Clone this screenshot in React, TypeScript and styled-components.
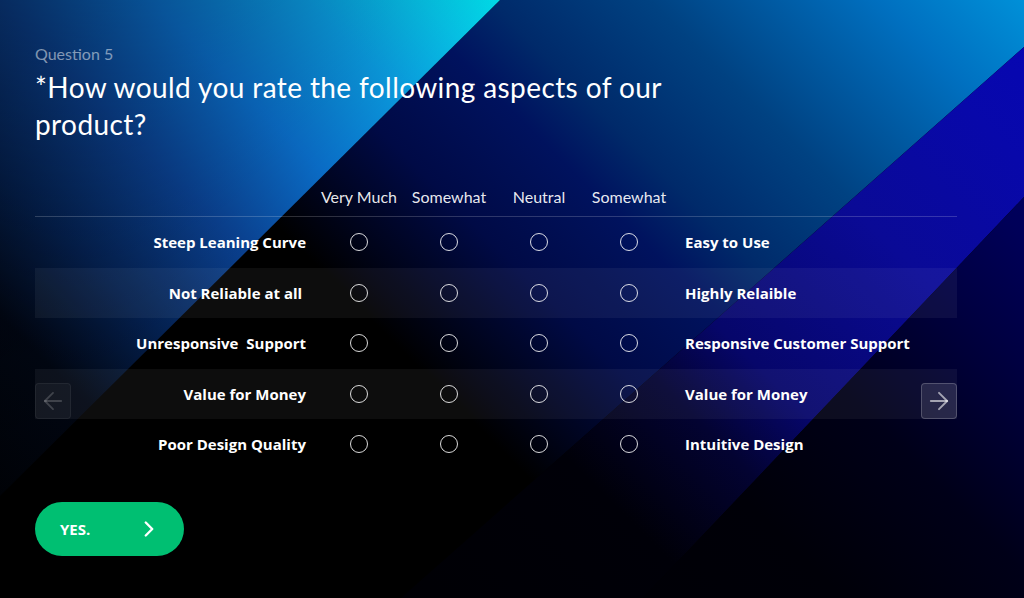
import React from "react";
import styled, { createGlobalStyle } from "styled-components";
import { ArrowLeft, ArrowRight, ChevronRight } from "lucide-react";

const GlobalStyle = createGlobalStyle`
  html, body { margin: 0; padding: 0; background: #000; }
  body {
    font-family: Lato, "Open Sans", "Liberation Sans", sans-serif;
    color: #fff;
    -webkit-font-smoothing: antialiased;
  }
  * { box-sizing: border-box; }
`;

const boldFont = `"Open Sans", Lato, "Liberation Sans", sans-serif`;

const Page = styled.div`
  position: relative;
  min-height: 100vh;
  width: 100%;
  overflow: hidden;
  background: #000;
`;

const Backdrop = styled.svg`
  position: absolute;
  inset: 0;
  width: 100%;
  height: 100%;
  display: block;
  z-index: 0;
`;

const Content = styled.main`
  position: relative;
  z-index: 1;
  padding: 44px 35px 0 35px;
  display: flex;
  flex-direction: column;
  align-items: flex-start;
`;

const QuestionLabel = styled.div`
  font-size: 16px;
  line-height: 20px;
  color: rgba(255, 255, 255, 0.5);
`;

const Title = styled.h1`
  margin: 5px 0 0;
  max-width: 670px;
  font-size: 28px;
  line-height: 37px;
  font-weight: 400;
  letter-spacing: 0.4px;
  color: #fff;
`;

const Table = styled.div`
  position: relative;
  width: 922px;
  margin-top: 35px;
  display: flex;
  flex-direction: column;
`;

const Grid = styled.div`
  display: grid;
  grid-template-columns: 279px repeat(4, 90px) 1fr;
  align-items: center;
`;

const HeaderRow = styled(Grid)`
  height: 39px;
  border-bottom: 1px solid rgba(255, 255, 255, 0.18);
`;

const HeaderCell = styled.div`
  font-size: 16px;
  line-height: 20px;
  text-align: center;
  white-space: nowrap;
  color: rgba(255, 255, 255, 0.92);
`;

const Row = styled(Grid)<{ $striped: boolean }>`
  height: 50.5px;
  background: ${(p) => (p.$striped ? "rgba(255, 255, 255, 0.05)" : "transparent")};
`;

const Label = styled.div<{ $side: "left" | "right" }>`
  font-family: ${boldFont};
  font-size: 15px;
  font-weight: 700;
  line-height: 20px;
  white-space: pre;
  text-align: ${(p) => (p.$side === "left" ? "right" : "left")};
  padding: ${(p) => (p.$side === "left" ? "0 8px 0 0" : "0 0 0 11px")};
  color: #fff;
`;

const Radio = styled.span`
  justify-self: center;
  width: 18px;
  height: 18px;
  border-radius: 50%;
  border: 1.5px solid rgba(255, 255, 255, 0.85);
  cursor: pointer;
`;

const NavButton = styled.button<{ $dir: "prev" | "next" }>`
  position: absolute;
  top: 205px;
  ${(p) => (p.$dir === "prev" ? "left: 0;" : "right: 0;")}
  width: 36px;
  height: 36px;
  padding: 0;
  display: flex;
  align-items: center;
  justify-content: center;
  border-radius: 4px;
  cursor: pointer;
  background: ${(p) =>
    p.$dir === "prev" ? "rgba(255, 255, 255, 0.035)" : "rgba(255, 255, 255, 0.11)"};
  border: 1px solid
    ${(p) => (p.$dir === "prev" ? "rgba(255, 255, 255, 0.06)" : "rgba(255, 255, 255, 0.2)")};
  color: ${(p) => (p.$dir === "prev" ? "rgba(255, 255, 255, 0.18)" : "rgba(255, 255, 255, 0.58)")};
`;

const YesButton = styled.button`
  margin-top: 32px;
  width: 149px;
  height: 54px;
  padding: 0 22px 0 25px;
  display: flex;
  align-items: center;
  justify-content: space-between;
  border: none;
  border-radius: 27px;
  background: #00bf72;
  color: #fff;
  font-family: ${boldFont};
  font-size: 15px;
  font-weight: 700;
  cursor: pointer;
`;

const columns = ["Very Much", "Somewhat", "Neutral", "Somewhat"];

const rows: [string, string][] = [
  ["Steep Leaning Curve", "Easy to Use"],
  ["Not Reliable at all ", "Highly Relaible"],
  ["Unresponsive  Support", "Responsive Customer Support"],
  ["Value for Money", "Value for Money"],
  ["Poor Design Quality", "Intuitive Design"],
];

const Q = { x1: 106.5, y1: 704.5, x2: 917.5, y2: -106.5 };
const P = { x1: 106.5, y1: -106.5, x2: 917.5, y2: 704.5 };

function Background() {
  return (
    <Backdrop viewBox="0 0 1024 598" preserveAspectRatio="none" aria-hidden="true">
      <defs>
        <linearGradient id="bandA" gradientUnits="userSpaceOnUse" {...Q}>
          <stop offset="0" stopColor="#000000" />
          <stop offset="0.174" stopColor="#010612" />
          <stop offset="0.262" stopColor="#04204f" />
          <stop offset="0.366" stopColor="#0a408f" />
          <stop offset="0.462" stopColor="#0a6cc6" />
          <stop offset="0.558" stopColor="#0a98dc" />
          <stop offset="0.628" stopColor="#06c0e4" />
          <stop offset="0.68" stopColor="#00dce6" />
        </linearGradient>
        <linearGradient id="shadeA" gradientUnits="userSpaceOnUse" {...P}>
          <stop offset="0" stopColor="#000" stopOpacity="0.35" />
          <stop offset="0.31" stopColor="#000" stopOpacity="0" />
        </linearGradient>
        <linearGradient id="bandB" gradientUnits="userSpaceOnUse" {...Q}>
          <stop offset="0" stopColor="#000000" />
          <stop offset="0.4" stopColor="#000000" />
          <stop offset="0.523" stopColor="#000a46" />
          <stop offset="0.616" stopColor="#00125e" />
          <stop offset="0.671" stopColor="#002a6a" />
          <stop offset="0.77" stopColor="#004282" />
          <stop offset="0.911" stopColor="#0070c0" />
          <stop offset="1" stopColor="#0090d8" />
        </linearGradient>
        <linearGradient id="bandC" gradientUnits="userSpaceOnUse" {...Q}>
          <stop offset="0" stopColor="#000000" />
          <stop offset="0.436" stopColor="#000008" />
          <stop offset="0.54" stopColor="#030332" />
          <stop offset="0.61" stopColor="#06066a" />
          <stop offset="0.767" stopColor="#0a0a96" />
          <stop offset="0.898" stopColor="#0808aa" />
          <stop offset="1" stopColor="#0606b4" />
        </linearGradient>
        <linearGradient id="bandD" gradientUnits="userSpaceOnUse" {...Q}>
          <stop offset="0" stopColor="#000000" />
          <stop offset="0.52" stopColor="#000008" />
          <stop offset="0.647" stopColor="#000018" />
          <stop offset="0.77" stopColor="#000040" />
          <stop offset="0.854" stopColor="#000058" />
          <stop offset="1" stopColor="#00006c" />
        </linearGradient>
      </defs>
      <rect x="0" y="0" width="1024" height="598" fill="#000" />
      <polygon points="500,0 1024,0 1024,47 401,598 -103,598 0,496" fill="url(#bandB)" />
      <polygon points="1024,47 1024,197 643,598 401,598" fill="url(#bandC)" />
      <polygon points="1024,197 1024,598 643,598" fill="url(#bandD)" />
      <polygon points="0,0 500,0 0,496" fill="url(#bandA)" />
      <polygon points="0,0 500,0 0,496" fill="url(#shadeA)" />
    </Backdrop>
  );
}

export default function App() {
  return (
    <Page>
      <GlobalStyle />
      <Background />
      <Content>
        <QuestionLabel>Question 5</QuestionLabel>
        <Title>*How would you rate the following aspects of our product?</Title>
        <Table>
          <HeaderRow>
            <span />
            {columns.map((c, i) => (
              <HeaderCell key={i}>{c}</HeaderCell>
            ))}
            <span />
          </HeaderRow>
          {rows.map(([left, right], i) => (
            <Row key={i} $striped={i % 2 === 1} role="radiogroup">
              <Label $side="left">{left}</Label>
              {columns.map((_, j) => (
                <Radio key={j} role="radio" aria-checked="false" />
              ))}
              <Label $side="right">{right}</Label>
            </Row>
          ))}
          <NavButton $dir="prev" aria-label="Previous">
            <ArrowLeft size={28} strokeWidth={1.6} />
          </NavButton>
          <NavButton $dir="next" aria-label="Next">
            <ArrowRight size={28} strokeWidth={1.6} />
          </NavButton>
        </Table>
        <YesButton>
          <span>YES.</span>
          <ChevronRight size={26} strokeWidth={2.2} />
        </YesButton>
      </Content>
    </Page>
  );
}
